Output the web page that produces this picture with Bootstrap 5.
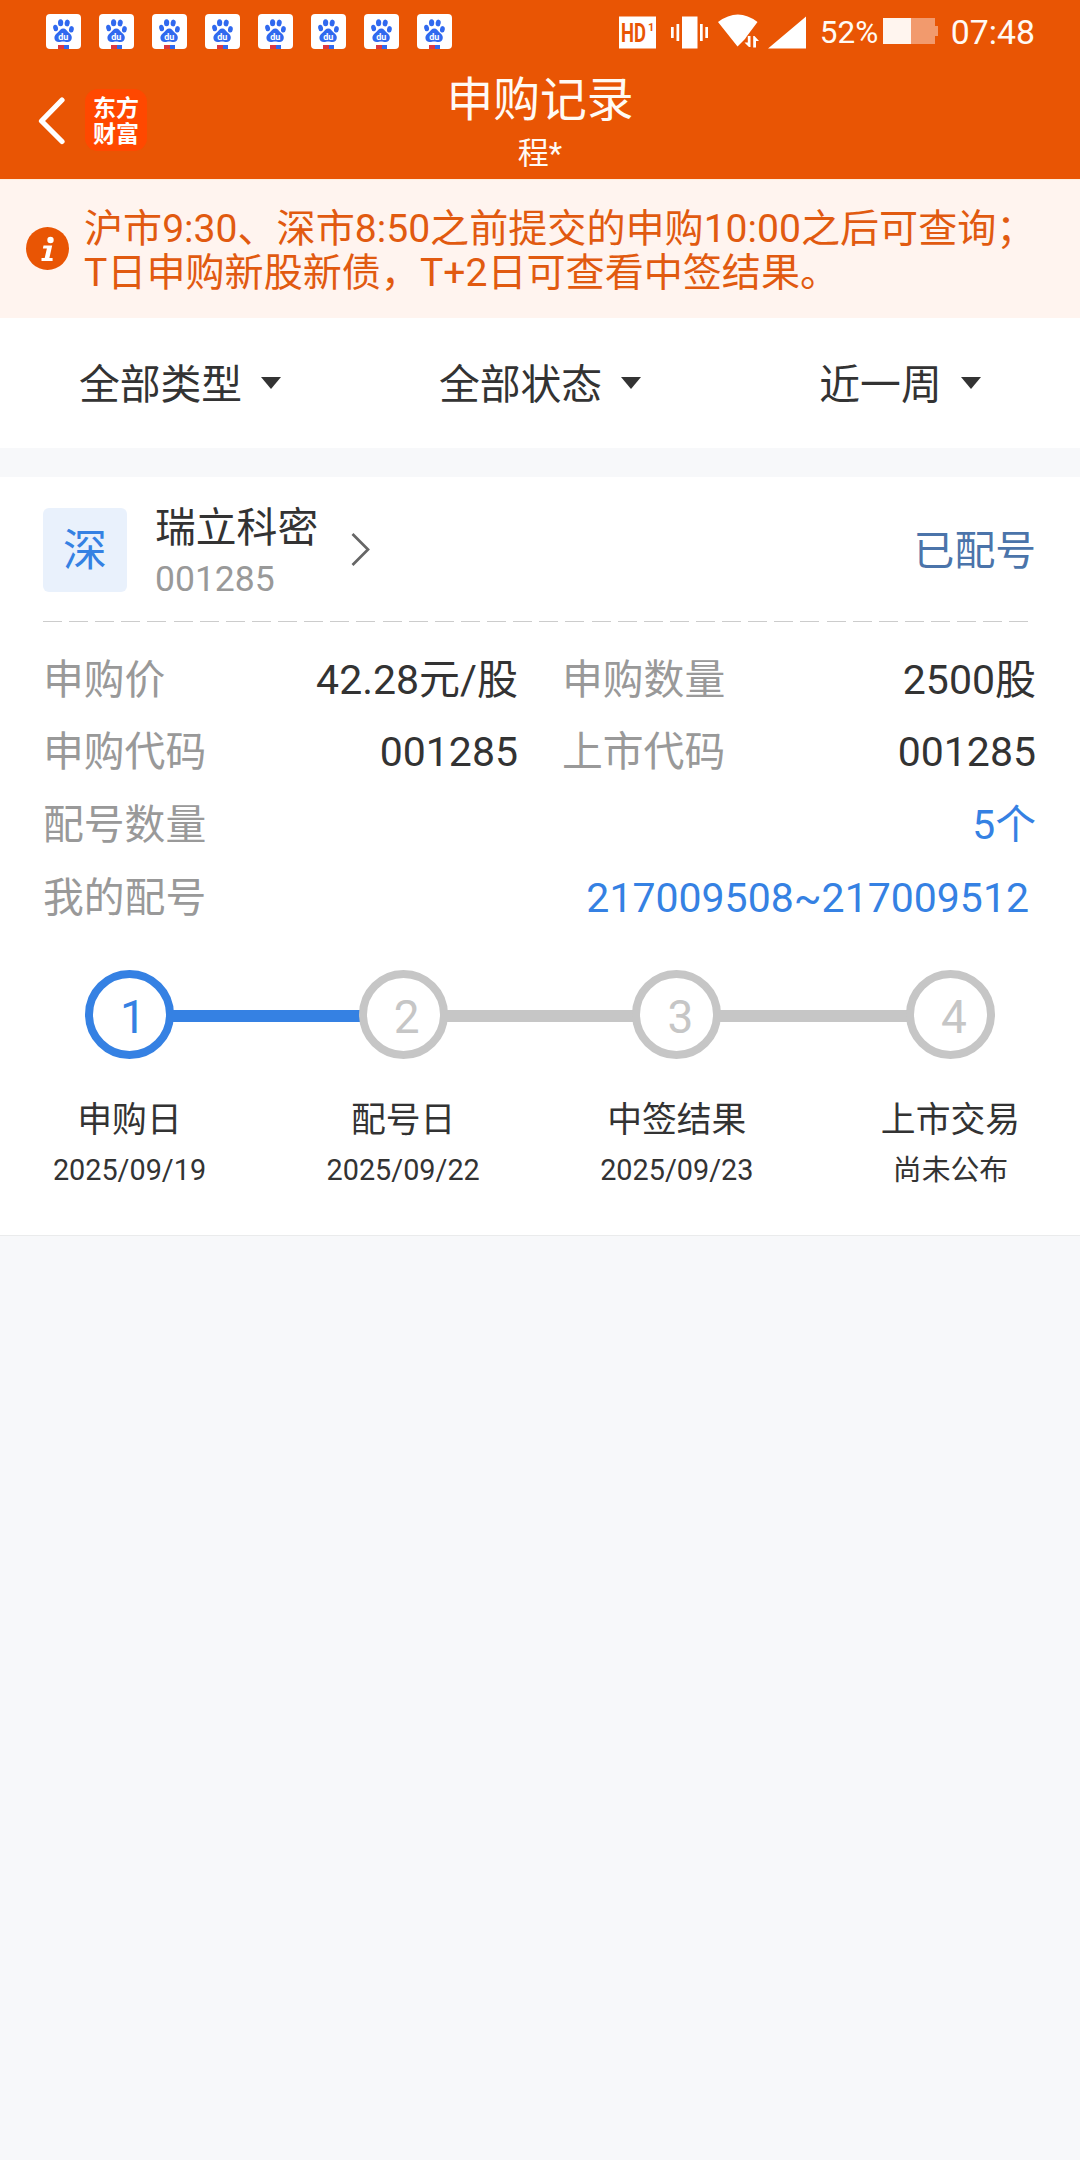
<!DOCTYPE html>
<html lang="zh-CN">
<head>
<meta charset="utf-8">
<meta name="viewport" content="width=device-width, initial-scale=1">
<title>申购记录</title>
<link href="https://cdn.jsdelivr.net/npm/bootstrap@5.3.0/dist/css/bootstrap.min.css" rel="stylesheet">
<style>
body{font-family:Roboto,"Noto Sans CJK SC",sans-serif;background:#f7f8fa;color:#333;font-size:40.8px;line-height:1;min-height:2160px}
svg{display:block;flex:none}
.topbar{background:#e95504;height:179px;color:#fffaf4}
.statusbar{height:62px;padding:14px 45px 0 46px}
.paws{gap:18px}
.sys-pct{font-size:31.5px;line-height:37px;margin-left:12px;width:63px}
.sys-time{font-size:33.8px;line-height:37px;margin-left:12px}
.titlebar{height:117px;padding-left:38px}
.side{width:220px;padding-top:27px;gap:19px}
.logo{width:62px;height:62px;border-radius:13px;background:#ff4800;color:#fff;font:700 23px/26px "Noto Sans CJK SC",sans-serif;padding-top:4px}
.heading{width:564px}
.heading h1{font-size:46.8px;line-height:60px;font-weight:400;margin:8px 0 0}
.heading small{font-size:31px;line-height:40px;margin-top:4px}
.notice{background:#fff4ef;height:139px;padding:0 0 0 26px;color:#e15a10;border-top:1px solid #ffeedd}
.notice p{font-size:39.1px;line-height:44px;padding-top:27px;margin-left:15px;white-space:nowrap}
.notice svg{margin-top:47px}
.filters{height:130px}
.filter-item{gap:19px;padding-top:4px}
.filter-item svg{margin-top:-4px}
.record{margin-top:29px;height:759px;border-bottom:1px solid #eaebec}
.stock{height:144px;padding:31px 44px 0 43px}
.market{width:84px;height:84px;border-radius:6px;background:#e9f1fc;color:#3581e3;font-size:44px;line-height:86px}
.names{margin-left:28px;width:167px}
.stock-name{line-height:42px;margin-top:-1px}
.stock-code{font-size:35.5px;line-height:40px;color:#999;margin-top:10px}
.state{color:#4b74aa;line-height:86px}
.dash{height:1px;margin:0 51px 0 43px;background:repeating-linear-gradient(90deg,#ccc 0 19px,transparent 19px 26.12px)}
.facts{padding:22px 44px 0 43px}
.fact-row{height:73px;line-height:72px}
.fact-row:first-child{height:72px}
.half{width:475px}
.half+.half{width:474px;margin-left:44px}
.half.d-flex{flex:none}
.key{color:#999}
.val{font-size:41px}
.blue{color:#3581e3}
.range{padding-right:7px;font-size:41px}
.track{padding:0 85px;margin-top:35px}
.dot{width:89px;height:89px;border:8.5px solid #c6c6c6;border-radius:50%;color:#c6c6c6;font-size:46px;line-height:78px;padding-left:7px;flex:none}
.dot.on{border-color:#3581e3;color:#3581e3}
.rail{height:12px;background:#c6c6c6;margin:2px -3px 0}
.rail.on{background:#3581e3}
.captions{padding:0 29px;margin-top:36px}
.caption-item{width:201px}
.cap-name{font-size:34.8px;line-height:50px}
.cap-date{font-size:28.8px;line-height:50px}
</style>
</head>
<body>
<header class="topbar">
  <div class="statusbar d-flex align-items-start">
    <div class="paws d-flex" id="paws"></div>
    <div class="d-flex align-items-start ms-auto">
      <svg width="190" height="36" viewBox="618 13 190 36" fill="#fff">
        <rect x="619" y="15.500" width="37" height="32"/>
        <g fill="#e95504" font-family="Roboto,sans-serif" font-weight="700"><text x="621" y="41" font-size="26" textLength="25" lengthAdjust="spacingAndGlyphs">HD</text><text x="648" y="30" font-size="11">1</text></g>
        <rect x="682" y="15.500" width="15.500" height="32"/>
        <path d="M671 26h2.700v11H671zM676.500 23h2.700v17h-2.700zM700 23h2.700v17H700zM705.300 26h2.700v11h-2.700z"/>
        <path d="M718 21Q738 6 757.500 21L747 35l-2 3-7.500 7.500z"/>
        <path d="M750.500 35v11h-1.500l-4.500-4.500h3.300V35zM753.200 46.500V35h1.300l4.500 5h-3v6.500z"/>
        <path d="M806 15.500V47.500H768z"/>
      </svg>
      <span class="sys-pct">52%</span>
      <svg width="56" height="36" viewBox="883 14 56 36"><rect x="883" y="18" width="52" height="26" fill="#f29a6d"/><rect x="935" y="26" width="3" height="10" fill="#f29a6d"/><rect x="883" y="18" width="28" height="26" fill="#fff5ef"/></svg>
      <span class="sys-time">07:48</span>
    </div>
  </div>
  <div class="titlebar d-flex">
    <div class="side d-flex">
      <svg width="28" height="62" viewBox="38 90 28 62" fill="none" stroke="#fff" stroke-width="5.200" stroke-linecap="round" stroke-linejoin="round"><path d="M62 101 41.500 122 62 142.500"/></svg>
      <div class="logo text-center">东方<br>财富</div>
    </div>
    <div class="heading d-flex flex-column text-center"><h1>申购记录</h1><small>程*</small></div>
  </div>
</header>

<section class="notice d-flex align-items-start">
  <svg width="43" height="43" viewBox="0 0 43 43"><circle cx="21.500" cy="21.500" r="21.500" fill="#e95504"/><circle cx="24.500" cy="13" r="3.200" fill="#fff"/><path d="M17.500 18.500h8.700l-2.800 12.500h3.200v3H15.500v-3h3.200l2.200-9.500h-4z" fill="#fff"/></svg>
  <p class="mb-0">沪市9:30、深市8:50之前提交的申购10:00之后可查询；<br>T日申购新股新债，T+2日可查看中签结果。</p>
</section>

<nav class="filters bg-white row g-0">
  <div class="col-4 filter-item d-flex align-items-center justify-content-center">全部类型<svg width="20" height="12"><path d="M0 0h20L10 12z" fill="#333"/></svg></div>
  <div class="col-4 filter-item d-flex align-items-center justify-content-center">全部状态<svg width="20" height="12"><path d="M0 0h20L10 12z" fill="#333"/></svg></div>
  <div class="col-4 filter-item d-flex align-items-center justify-content-center">近一周<svg width="20" height="12"><path d="M0 0h20L10 12z" fill="#333"/></svg></div>
</nav>

<main class="record bg-white">
  <div class="stock d-flex align-items-start">
    <div class="market text-center">深</div>
    <div class="names"><div class="stock-name">瑞立科密</div><div class="stock-code">001285</div></div>
    <svg class="ms-4 mt-4" width="24" height="36" viewBox="346 532 24 36" fill="none" stroke="#666" stroke-width="2.700"><path d="M352.500 534 368 549.500 352.500 565"/></svg>
    <div class="state ms-auto">已配号</div>
  </div>
  <div class="dash"></div>
  <div class="facts">
    <div class="fact-row d-flex"><div class="half d-flex justify-content-between"><span class="key">申购价</span><span class="val">42.28元/股</span></div><div class="half d-flex justify-content-between"><span class="key">申购数量</span><span class="val">2500股</span></div></div>
    <div class="fact-row d-flex"><div class="half d-flex justify-content-between"><span class="key">申购代码</span><span class="val">001285</span></div><div class="half d-flex justify-content-between"><span class="key">上市代码</span><span class="val">001285</span></div></div>
    <div class="fact-row d-flex justify-content-between"><span class="key">配号数量</span><span class="blue">5个</span></div>
    <div class="fact-row d-flex justify-content-between"><span class="key">我的配号</span><span class="blue range">217009508~217009512</span></div>
  </div>
  <div class="track d-flex align-items-center">
    <div class="dot on text-center">1</div><div class="rail on flex-fill"></div>
    <div class="dot text-center">2</div><div class="rail flex-fill"></div>
    <div class="dot text-center">3</div><div class="rail flex-fill"></div>
    <div class="dot text-center">4</div>
  </div>
  <div class="captions d-flex justify-content-between text-center">
    <div class="caption-item"><div class="cap-name">申购日</div><div class="cap-date">2025/09/19</div></div>
    <div class="caption-item"><div class="cap-name">配号日</div><div class="cap-date">2025/09/22</div></div>
    <div class="caption-item"><div class="cap-name">中签结果</div><div class="cap-date">2025/09/23</div></div>
    <div class="caption-item"><div class="cap-name">上市交易</div><div class="cap-date">尚未公布</div></div>
  </div>
</main>
<script src="https://cdn.jsdelivr.net/npm/bootstrap@5.3.0/dist/js/bootstrap.bundle.min.js"></script>
<script>
const paw = `<svg width="35" height="35" viewBox="0 0 35 35"><rect width="35" height="35" rx="4" fill="#fff"/>
<g fill="#3069ef"><ellipse cx="14.600" cy="8.800" rx="2.600" ry="3.500"/><ellipse cx="21.200" cy="9" rx="2.500" ry="3.400" transform="rotate(10 21.200 9)"/><ellipse cx="9.600" cy="14" rx="2.400" ry="3.300" transform="rotate(-12 9.600 14)"/><ellipse cx="25.400" cy="15.300" rx="2.400" ry="3.200" transform="rotate(8 25.400 15.300)"/>
<path d="M17.300 14.500c2.500 0 3.300 2 5 3.800 2 2 3.800 3 3.500 5.700-.3 2.600-2 4-4.500 3.900-1.600-.1-2.600-.5-4.200-.5s-2.600.5-4.200.5c-2.600 0-4.300-1.500-4.500-4-.1-2.600 1.700-3.700 3.600-5.600 1.700-1.800 2.800-3.800 5.300-3.800z"/></g>
<text x="17.200" y="25.600" font-family="Roboto,sans-serif" font-weight="700" font-size="9" fill="#fff" text-anchor="middle">du</text>
<path d="M12 31h6v4h-6z" fill="#dc3940"/><path d="M18 31h5v4h-5z" fill="#3069ef"/></svg>`;
document.getElementById('paws').innerHTML = paw.repeat(8);
</script>
</body>
</html>
